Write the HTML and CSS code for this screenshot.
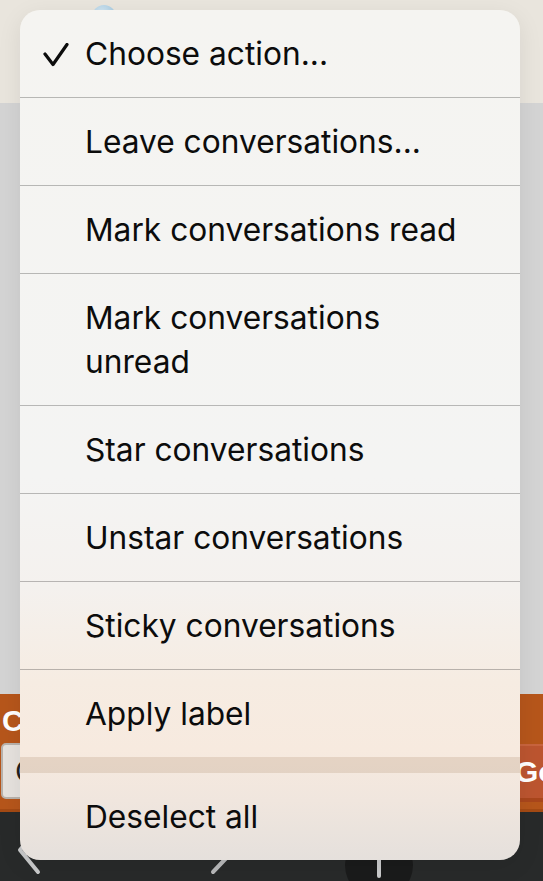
FILE: index.html
```html
<!DOCTYPE html>
<html lang="en">
<head>
    <meta charset="UTF-8">
    <meta name="viewport" content="width=device-width, initial-scale=1.0">
    <title>Conversations</title>
    <link rel="stylesheet" href="styles.css">
</head>
<body>
    <div class="page">
        <header class="topbar">
            <span class="globe"></span>
        </header>

        <main class="content"></main>

        <div class="actions-bar">
            <label class="actions-label">Choose</label>
            <div class="actions-row">
                <div class="select-box">Choose action...</div>
                <button class="go-button">Go</button>
            </div>
        </div>

        <nav class="bottom-nav">
            <span class="nav-btn back">
                <svg width="60" height="69" viewBox="0 0 60 69"><path d="M38 16 L20 38 L38 60" /></svg>
            </span>
            <span class="nav-btn forward">
                <svg width="60" height="69" viewBox="0 0 60 69"><path d="M23 20 L42 40 L23 60" /></svg>
            </span>
            <span class="nav-circle"><span class="nav-bar"></span></span>
        </nav>
    </div>

    <div class="menu">
        <div class="menu-item">
            <span class="mark">
                <svg width="26" height="24" viewBox="0 0 26 24"><path d="M2 11 L10 21.5 L24 1.5" /></svg>
            </span>
            <span class="label">Choose action...</span>
        </div>
        <div class="menu-item"><span class="mark"></span><span class="label">Leave conversations...</span></div>
        <div class="menu-item"><span class="mark"></span><span class="label">Mark conversations read</span></div>
        <div class="menu-item"><span class="mark"></span><span class="label">Mark conversations<br>unread</span></div>
        <div class="menu-item"><span class="mark"></span><span class="label">Star conversations</span></div>
        <div class="menu-item"><span class="mark"></span><span class="label">Unstar conversations</span></div>
        <div class="menu-item"><span class="mark"></span><span class="label">Sticky conversations</span></div>
        <div class="menu-item last"><span class="mark"></span><span class="label">Apply label</span></div>
        <div class="menu-gap"></div>
        <div class="menu-item last"><span class="mark"></span><span class="label">Deselect all</span></div>
    </div>
</body>
</html>
```

FILE: styles.css
```css
body {
    margin: 0;
    font-family: Inter, "Noto Sans", sans-serif;
    overflow: hidden;
    background: #282a2a;
}

.page {
    display: flex;
    flex-direction: column;
    height: 881px;
    overflow: hidden;
}

.page > * {
    flex: none;
}

.topbar {
    height: 103px;
    background: #e9e5dd;
    position: relative;
}

.globe {
    position: absolute;
    left: 92px;
    top: 5px;
    width: 24px;
    height: 24px;
    border-radius: 50%;
    background: radial-gradient(circle at 40% 35%, #d8eaf4, #8fbcd8);
}

.content {
    height: 591px;
    background: #d4d4d4;
}

.actions-bar {
    height: 118px;
    box-sizing: border-box;
    background: #b6561b;
    padding: 12px 0 0 2px;
    border-bottom: 3px solid #a44a14;
}

.actions-label {
    display: block;
    color: #fff;
    font-family: "Liberation Sans", Arial, sans-serif;
    font-weight: bold;
    font-size: 30px;
    line-height: 30px;
}

.actions-row {
    display: flex;
    justify-content: space-between;
    margin-top: 7px;
    margin-left: -1px;
}

.select-box {
    width: 300px;
    height: 56px;
    box-sizing: border-box;
    background: #e6e2de;
    border: 2px solid #b8b2ac;
    border-radius: 5px;
    padding: 8px 12px;
    font-size: 30px;
    color: #222;
}

.go-button {
    height: 58px;
    margin-top: 1px;
    margin-right: -26px;
    padding: 0 0 0 6px;
    width: 60px;
    text-align: left;
    background: #bc5530;
    border: none;
    border-top: 2px solid #c8643e;
    border-bottom: 4px solid #a9461c;
    color: #fff;
    font-family: "Liberation Sans", Arial, sans-serif;
    font-weight: bold;
    font-size: 30px;
}

.bottom-nav {
    height: 69px;
    display: flex;
    align-items: flex-start;
    background: #282a2a;
}

.nav-btn svg path {
    fill: none;
    stroke: #c9cacb;
    stroke-width: 4;
    stroke-linecap: round;
    stroke-linejoin: round;
}

.nav-btn.forward {
    margin-left: 130px;
}

.nav-btn.forward svg path {
    stroke: #b8b9ba;
}

.nav-circle {
    width: 68px;
    height: 68px;
    border-radius: 50%;
    background: #1a1b1b;
    margin-left: 95px;
    margin-top: 19px;
    display: flex;
    justify-content: center;
}

.nav-bar {
    width: 4px;
    height: 33px;
    margin-top: 14px;
    background: #c9cacb;
    border-radius: 2px;
}

.menu {
    position: absolute;
    left: 20px;
    top: 10px;
    width: 500px;
    border-radius: 20px;
    overflow: hidden;
    background: linear-gradient(180deg,
        #f5f4f1 0%,
        #f4f4f3 55%,
        #f4f1ee 68%,
        #f6ece2 79%,
        #f7eadf 87%,
        #f0e6de 93%,
        #e5e0dc 100%);
    box-shadow: 0 6px 24px rgba(0, 0, 0, 0.08);
}

.menu-item {
    display: flex;
    align-items: flex-start;
    padding: 21.5px 0;
    border-bottom: 1px solid rgba(0, 0, 0, 0.25);
    font-size: 31.7px;
    line-height: 44px;
    color: #0c0c0c;
}

.menu-item.last {
    border-bottom: none;
}

.menu-gap {
    height: 16px;
    background: rgba(170, 130, 100, 0.22);
}

.mark {
    flex: none;
    width: 65px;
    display: flex;
    justify-content: flex-end;
    padding-right: 16px;
    box-sizing: border-box;
    padding-top: 11px;
}

.mark svg path {
    fill: none;
    stroke: #0c0c0c;
    stroke-width: 3.2;
    stroke-linecap: round;
    stroke-linejoin: round;
}
```
